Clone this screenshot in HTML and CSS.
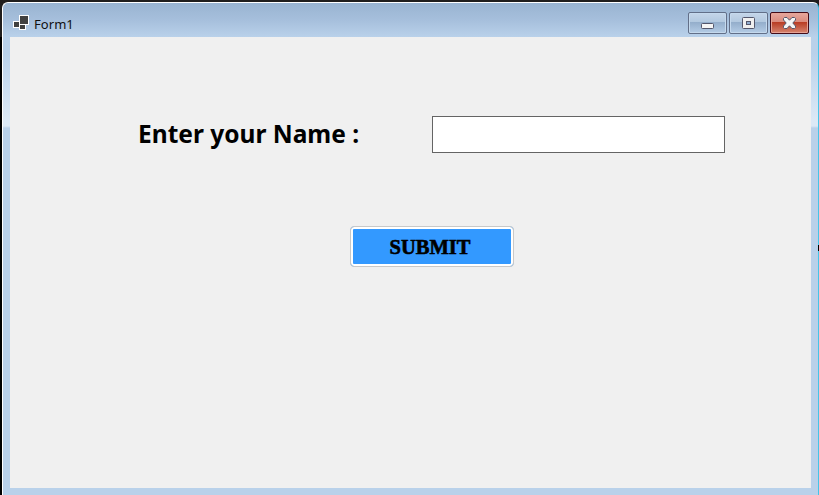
FILE: index.html
```html
<!DOCTYPE html>
<html lang="en">
<head>
<meta charset="utf-8">
<title>Form1</title>
<link rel="stylesheet" href="styles.css">
</head>
<body>
<div class="desktop">
  <main class="window">
    <header class="titlebar">
      <svg class="app-icon" width="16" height="16" viewBox="0 0 16 16" shape-rendering="crispEdges">
        <path fill="#fff" d="M6 0h10v10h-3v5H6v-2H0V6h6z"/>
        <path fill="#404040" d="M7 1h8v8H7zM1 7h5v5H1zM7 10h5v4H7z"/>
      </svg>
      <h1 class="title">Form1</h1>
      <div class="controls">
        <button class="control" aria-label="Minimize">
          <svg width="37" height="20" viewBox="0 0 37 20"><rect x="12.500" y="10.500" width="12" height="5" rx="1" fill="#f5f5f5" stroke="#53566b"/></svg>
        </button>
        <button class="control" aria-label="Maximize">
          <svg width="37" height="20" viewBox="0 0 37 20"><rect x="12.500" y="4.500" width="12" height="11" rx="1" fill="#f0f0f0" stroke="#53566b"/><rect x="16.500" y="8.500" width="4" height="3" fill="#91add0" stroke="#53566b"/></svg>
        </button>
        <button class="control close" aria-label="Close">
          <svg width="37" height="20" viewBox="0 0 37 20"><path fill="#f5f5f5" stroke="#53566b" stroke-linejoin="round" d="M13.500 4.500h2.500l2.500 2.700 2.500-2.700h2.500l1 1v1.500l-2.700 3 2.700 3v1.500l-1 1h-2.500l-2.500-2.700-2.500 2.700h-2.500l-1-1V13l2.700-3-2.700-3V5.500z"/></svg>
        </button>
      </div>
    </header>
    <form class="client">
      <div class="field">
        <label class="label" for="name">Enter your Name :</label>
        <input class="input" id="name" type="text">
      </div>
      <button class="submit" type="button"><span class="submit-text">SUBMIT</span></button>
    </form>
  </main>
  <span class="edge-mark"></span>
</div>
</body>
</html>
```
FILE: styles.css
```css
* { box-sizing: border-box; }
body { margin: 0; overflow: hidden; }
.desktop {
  position: relative;
  width: 819px;
  height: 495px;
  padding: 2px 0 0 2px;
  background: linear-gradient(#201e1d 0 37px, #000 37px);
}
.window {
  width: 817px;
  height: 493px;
  padding: 0 7px 7px;
  border: solid #fff;
  border-width: 1px 0 0 1px;
  border-right: 1px solid #45c4e8;
  border-radius: 6px 6px 0 0;
  background: linear-gradient(#99b4d1 0, #a6bfdc 17px, #b9d1ea 34px, #b9d1ea 50px, #dce9f6 118px, #dce9f6 123px, #b9d1ea 125px);
}
.titlebar {
  display: flex;
  align-items: flex-start;
  height: 34px;
  padding: 9px 2px 0 3px;
}
.app-icon { margin-top: 3px; }
.title {
  margin: 3px 0 0 5px;
  font: 400 13px/18px "Noto Sans", "Open Sans", sans-serif;
  letter-spacing: 0.05px;
  color: #101010;
}
.controls { display: flex; gap: 2px; margin-left: auto; }
.control {
  width: 39px;
  height: 22px;
  padding: 0;
  border: 1px solid #626f88;
  border-radius: 2px;
  background: linear-gradient(#c5d6e9 0, #b2c8df 9px, #93adca 9px, #b4cce6 100%);
  box-shadow: inset 0 0 0 1px #c5d9ed;
}
.control svg { display: block; }
.close {
  border-color: #430b18;
  background: linear-gradient(#e7a79e 0, #d98a7c 9px, #b83a22 9px, #d58570 100%);
  box-shadow: inset 0 0 0 1px #e6a396;
}
.client {
  display: flex;
  flex-direction: column;
  height: 451px;
  padding-top: 79px;
  background: #f0f0f0;
}
.field { display: flex; width: 715px; padding-left: 128px; justify-content: space-between; }
.label {
  font: 700 24.5px/36px "Noto Sans", "Open Sans", sans-serif;
  color: #000;
  white-space: nowrap;
}
.input {
  width: 293px;
  height: 37px;
  border: 1px solid #646464;
  background: #fff;
  outline: 0;
}
.submit {
  width: 164px;
  height: 41px;
  margin: 73px 0 0 340px;
  padding: 0 4px 0 0;
  border: 1px solid #c8c8c8;
  border-radius: 4px;
  background: #3399ff;
  box-shadow: inset 0 0 0 2px #fff;
}
.submit-text {
  display: inline-block;
  font: 700 20.5px/24px "Liberation Serif", serif;
  color: #000;
  -webkit-text-stroke: 0.6px #000;
}
.edge-mark {
  position: absolute;
  top: 245px;
  right: 0;
  width: 1px;
  height: 6px;
  background: #000;
}
```
